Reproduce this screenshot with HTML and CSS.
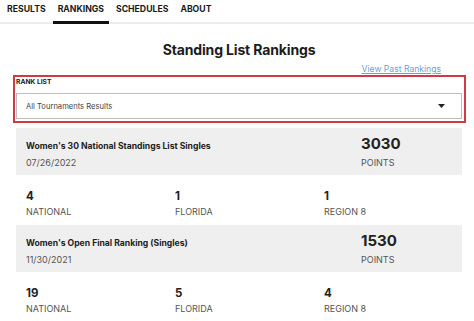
FILE: index.html
```html
<!DOCTYPE html>
<html lang="en">
<head>
<meta charset="utf-8">
<title>Standing List Rankings</title>
<link rel="stylesheet" href="styles.css">
</head>
<body>
<nav class="tabs">
  <a class="tab">RESULTS</a>
  <a class="tab active">RANKINGS</a>
  <a class="tab">SCHEDULES</a>
  <a class="tab">ABOUT</a>
</nav>
<main class="page">
  <h1 class="title">Standing List Rankings</h1>
  <div class="past"><a class="past-link">View Past Rankings</a></div>
  <section class="ranklist">
    <div class="ranklist-label">RANK LIST</div>
    <div class="select">
      <span>All Tournaments Results</span>
      <svg class="caret" width="7" height="4" viewBox="0 0 7 4"><path d="M0 0H7L3.5 4Z" fill="#222"/></svg>
    </div>
  </section>

  <div class="card">
    <div class="card-main">
      <div class="card-title">Women's 30 National Standings List Singles</div>
      <div class="card-date">07/26/2022</div>
    </div>
    <div class="card-points">
      <div class="points-num">3030</div>
      <div class="points-label">POINTS</div>
    </div>
  </div>
  <div class="stats">
    <div class="stat"><div class="stat-num">4</div><div class="stat-label">NATIONAL</div></div>
    <div class="stat"><div class="stat-num">1</div><div class="stat-label">FLORIDA</div></div>
    <div class="stat"><div class="stat-num">1</div><div class="stat-label">REGION 8</div></div>
  </div>

  <div class="card">
    <div class="card-main">
      <div class="card-title">Women's Open Final Ranking (Singles)</div>
      <div class="card-date">11/30/2021</div>
    </div>
    <div class="card-points">
      <div class="points-num">1530</div>
      <div class="points-label">POINTS</div>
    </div>
  </div>
  <div class="stats">
    <div class="stat"><div class="stat-num">19</div><div class="stat-label">NATIONAL</div></div>
    <div class="stat"><div class="stat-num">5</div><div class="stat-label">FLORIDA</div></div>
    <div class="stat"><div class="stat-num">4</div><div class="stat-label">REGION 8</div></div>
  </div>
</main>
</body>
</html>
```

FILE: styles.css
```css
* { box-sizing: border-box; }
html, body { margin: 0; padding: 0; background: #fff; }
body {
  font-family: "Inter", "Liberation Sans", Arial, sans-serif;
  color: #222;
  overflow: hidden;
}

.tabs {
  display: flex;
  gap: 2px;
  padding-left: 2px;
  height: 24px;
  border-bottom: 2px solid #ececec;
}
.tab {
  display: block;
  padding: 3px 5px 0;
  height: 24px;
  margin-bottom: -2px;
  font-size: 8.7px;
  font-weight: 700;
  line-height: 12px;
  color: #1a1a1a;
  border-bottom: 3px solid transparent;
}
.tab.active { border-bottom-color: #111; }

.page {
  width: 446px;
  margin-left: 16px;
}

.title {
  margin: 0;
  padding-top: 17px;
  font-size: 14px;
  line-height: 18px;
  font-weight: 700;
  letter-spacing: -0.15px;
  text-align: center;
  color: #1c1c1c;
}

.past {
  display: flex;
  justify-content: flex-end;
  padding-right: 21px;
  margin-top: 4px;
  height: 12px;
}
.past-link {
  font-size: 8.6px;
  line-height: 12px;
  color: #6c9fd6;
  text-decoration: underline;
}

.ranklist {
  margin: 0 -4px 0 -3px;
  padding: 0 2px 2px 1px;
  border: 2px solid #cf3a44;
}
.ranklist-label {
  font-size: 6.7px;
  font-weight: 700;
  line-height: 10px;
  color: #1a1a1a;
}
.select {
  margin-top: 6px;
  height: 26px;
  border: 1px solid #bdbdbd;
  display: flex;
  align-items: center;
  justify-content: space-between;
  padding: 0 16px 0 9px;
  font-size: 7.6px;
  color: #444;
}
.caret { display: block; }

.card {
  margin-top: 5px;
  height: 47px;
  background: #efefef;
  display: flex;
  padding: 0 10px;
}
.card + .stats + .card { margin-top: 0; }
.card-main { flex: 1; padding-top: 13px; }
.card-title {
  font-size: 8.6px;
  font-weight: 700;
  line-height: 11px;
  color: #222;
}
.card-date {
  margin-top: 5px;
  font-size: 9px;
  line-height: 11px;
  color: #555;
}
.card-points { width: 91px; padding-top: 7px; }
.points-num {
  font-size: 15px;
  font-weight: 700;
  line-height: 17px;
  color: #222;
}
.points-label {
  margin-top: 5px;
  font-size: 9px;
  line-height: 11px;
  color: #555;
}

.stats {
  height: 50px;
  display: grid;
  grid-template-columns: 149px 149px 1fr;
  align-content: start;
  padding: 14px 0 0 10px;
}
.stat-num {
  font-size: 11.5px;
  font-weight: 700;
  line-height: 14px;
  color: #222;
}
.stat-label {
  margin-top: 3px;
  font-size: 9px;
  line-height: 11px;
  color: #555;
}
```
